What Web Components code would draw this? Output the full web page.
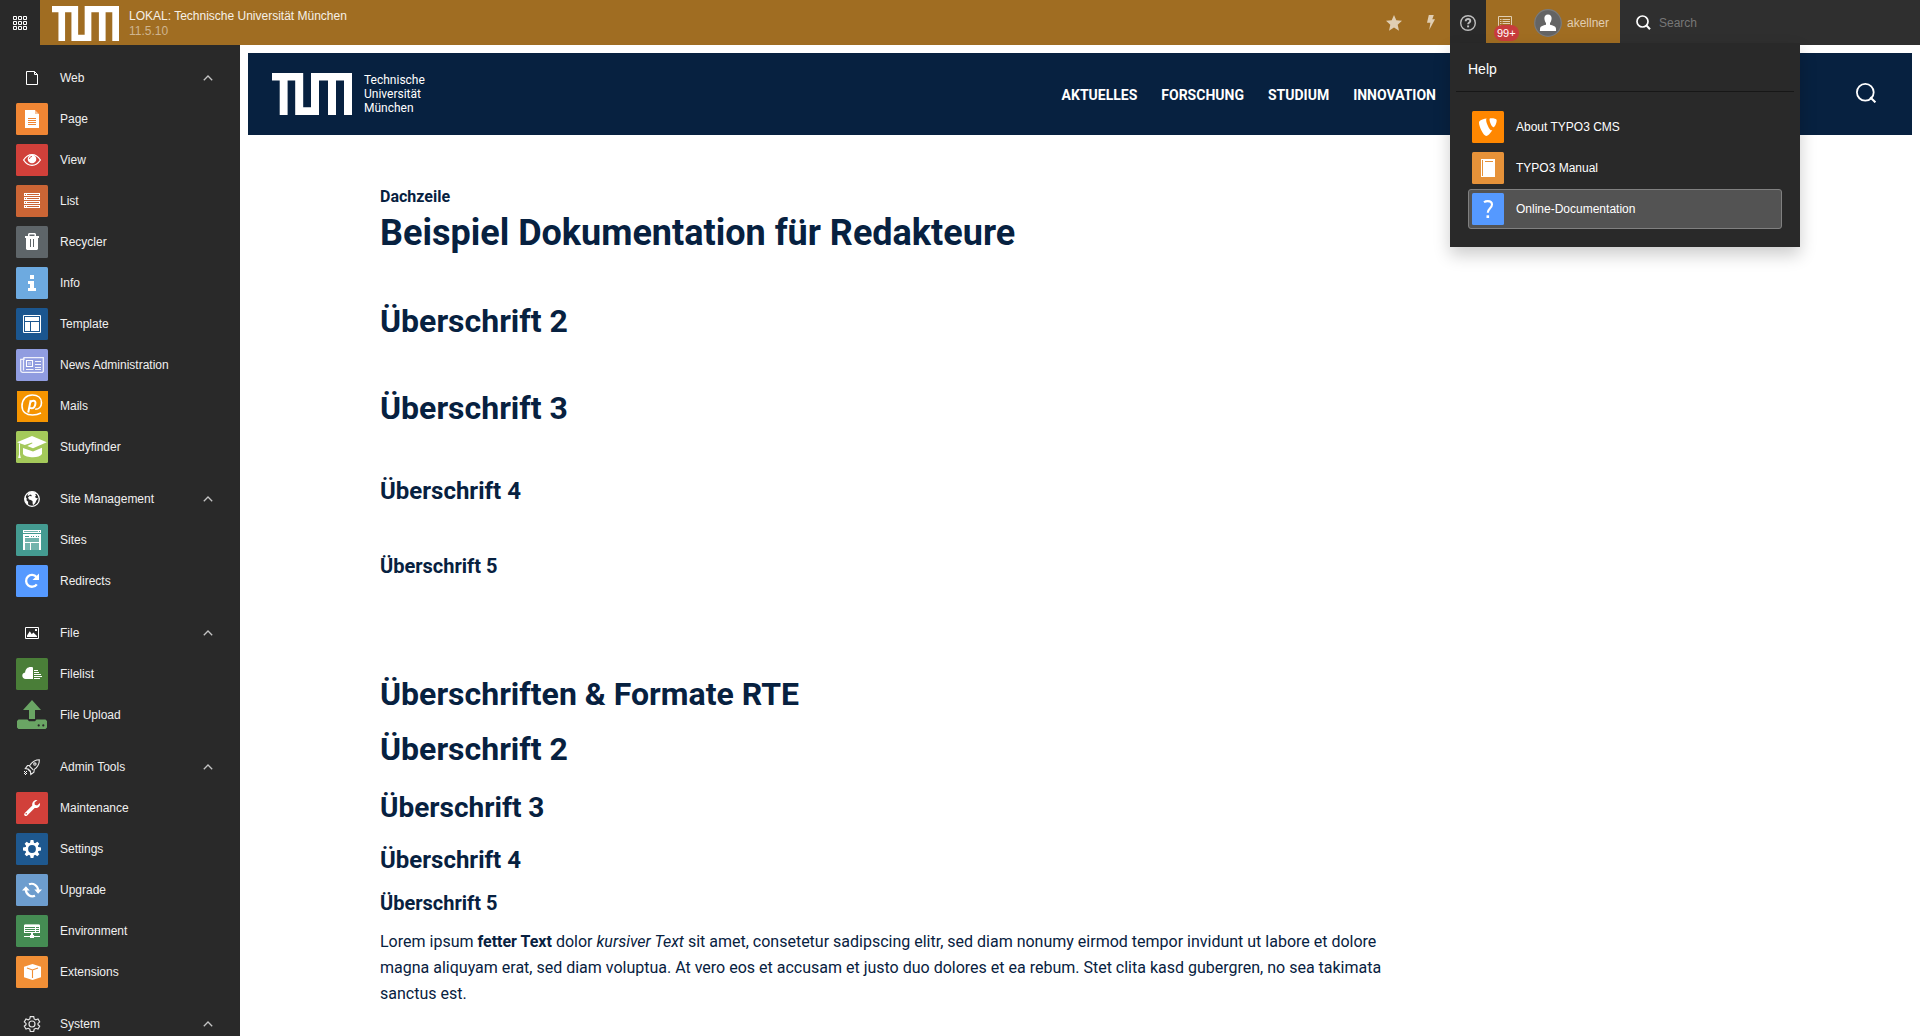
<!DOCTYPE html>
<html lang="de">
<head>
<meta charset="utf-8">
<title>TYPO3 Backend</title>
<style>
html, body { margin: 0; height: 100%; }
body { overflow: hidden; background: #fff; font-family: "Liberation Sans", Arial, sans-serif; font-size: 12px; }
</style>
</head>
<body>
<be-app></be-app>

<script>
const ICONS = {
  apps: `<svg viewBox="0 0 14 14" width="14" height="14" fill="none" stroke="#fff"><path d="M.5.5h3v3h-3zM5.5.5h3v3h-3zM10.5.5h3v3h-3zM.5 5.5h3v3h-3zM5.5 5.5h3v3h-3zM10.5 5.5h3v3h-3zM.5 10.5h3v3h-3zM5.5 10.5h3v3h-3zM10.5 10.5h3v3h-3z"/></svg>`,
  star: `<svg viewBox="0 0 16 16" width="16" height="16" fill="#e0ceb3"><path d="M8 0l2.3 5.3 5.7.5-4.3 3.9L13 15.7 8 12.5l-5 3.2 1.3-6L0 5.8l5.7-.5z"/></svg>`,
  bolt: `<svg viewBox="0 0 8 15" width="8" height="15" fill="#e0ceb3"><path d="M1.8 0h5L5.300 4.200H8L2.200 15l1.200-7.300H0z"/></svg>`,
  help: `<svg viewBox="0 0 16 16" width="16" height="16" fill="none" stroke="#bebebe"><circle cx="8" cy="8" r="7.300" stroke-width="1.400"/><path d="M5.700 6.200c0-1.500 1-2.200 2.300-2.200s2.300.7 2.300 2c0 1.500-2.200 1.600-2.200 3.300" stroke-width="1.900"/><path d="M7.100 11.400h2" stroke-width="1.900"/></svg>`,
  sysinfo: `<svg viewBox="0 0 14 14" width="14" height="14" fill="none" stroke="#e0ceb3"><path d="M.5.5h13v13H.5zM2 3.500h1.500M4.500 3.500H12M2 5.500h1.500M4.500 5.500H12M2 7.500h1.500M4.500 7.500H12M2 9.500h1.500M4.500 9.500H12"/></svg>`,
  avatar: `<svg viewBox="0 0 28 28" width="28" height="28"><circle cx="14" cy="14" r="13.300" fill="#646464" stroke="#7b7b7b" stroke-width="1.200"/><path fill="#fff" d="M14 5.500c2.500 0 3.800 1.700 3.600 4.200-.2 2-.8 3.200-1.600 4.200v1.800c2.700.6 5.500 1.500 5.900 3.200l.2 3.100H5.900l.2-3.100c.4-1.700 3.200-2.600 5.900-3.200v-1.800c-.8-1-1.400-2.200-1.600-4.200-.2-2.500 1.100-4.200 3.600-4.200z"/></svg>`,
  search: `<svg viewBox="0 0 15 15" width="15" height="15" fill="none" stroke="#fff" stroke-width="1.700"><circle cx="6.500" cy="6.500" r="5.500"/><path d="M10.500 10.500l3.500 3.700" stroke-width="2"/></svg>`,
  searchLarge: `<svg viewBox="0 0 20 20" width="20" height="20" fill="none" stroke="#fff" stroke-width="1.800"><circle cx="9.300" cy="9.300" r="8.400"/><path d="M14.200 14.200l5.200 5.200" stroke-width="2"/></svg>`,
  chevron: `<svg viewBox="0 0 10 6" width="10" height="6" fill="none" stroke="#c4c4c4" stroke-width="1.300"><path d="M.8 5.200L5 1l4.200 4.200"/></svg>`,

  web: `<path d="M10.500 9.500h8l3 3v10h-11zM18.500 9.500v3h3" fill="none" stroke="#fff"/>`,
  site: `<circle cx="16" cy="16" r="7.300" fill="none" stroke="#fff" stroke-width="1.300"/><path fill="#fff" d="M13 9.200l4.500-.4 2.800 1.600-1.100 1.100 1 .9-1.100 1 .7 1.500 2.200.3-1.700 2.300-.9 2.200-1.800 2.300-.9-.8-.2-3.100-1.800-1.200-1.700-.5-1-1.800 1.500-1.500 2.300.1-.4-1.300-1.400-.4-1 1.300-1.700-.5z"/><path fill="#fff" d="M9.200 13.500l1.600 2-.3 1.700 1.600 1.600v3.100c-2-1.200-3.500-4-3.500-6.200z"/>`,
  file: `<path d="M9.500 10.500h13v11h-13z" fill="none" stroke="#fff"/><path fill="#fff" d="M11 20v-1.500l2.800-4.300 2 3 1.500-1.800 3.700 3.500V20zM19 12h2v2h-2z"/>`,
  tools: `<g fill="none" stroke="#e8e8e8" stroke-width="1.100"><path d="M23.300 8.700c-4.300.1-7 1.900-9.300 5.500l-2.500.4-2.200 3 2.600.4 2.600 2.600.3 2.800 3.100-2.200.4-2.800c3.400-2.300 5.200-5.100 5-9.700z"/><path d="M12 18l2.500 2.500M13.400 15l3.800 3.800"/><circle cx="18.900" cy="13.100" r="1.200"/></g><path fill="#fff" d="M8 20h1v1H8zM9 21h1v1H9zM8 22h1v1H8zM10 22h1v1h-1zM9 23h1v1H9zM10 20h1v1h-1z"/>`,
  system: `<g fill="none" stroke="#e4e4e4" stroke-width="1.200"><path d="M14.300 8.600h3.400l.5 2.300 1.600.9 2.200-.8 1.700 2.900-1.700 1.500v1.300l1.700 1.500-1.700 2.900-2.200-.8-1.600.9-.5 2.300h-3.400l-.5-2.300-1.600-.9-2.200.8-1.700-2.900 1.700-1.500v-1.300l-1.700-1.500L10 11l2.200.8 1.600-.9z"/><circle cx="16" cy="16" r="3"/></g>`,

  page: `<rect width="32" height="32" rx="1.500" fill="#f08634"/><path fill="#fff" d="M9 7h10v4h4v14H9z"/><path fill="#fff" opacity=".5" d="M19 7l4 4h-4z"/><path stroke="#f08634" d="M12 15.500h8M12 17.500h8M12 19.500h8M12 21.500h8"/>`,
  view: `<rect width="32" height="32" rx="1.500" fill="#d1403a"/><path d="M7.600 16C10 12.300 12.800 10.700 16 10.700s6 1.600 8.400 5.300c-2.400 3.700-5.200 5.300-8.400 5.300S10 19.700 7.600 16z" fill="none" stroke="#fff" stroke-width="1.300"/><circle cx="16" cy="15" r="4.300" fill="#fff"/><path d="M13.500 15c0-1.500 1-2.500 2.500-2.500" stroke="#d1403a" fill="none" stroke-width=".9"/>`,
  list: `<rect width="32" height="32" rx="1.500" fill="#cb6535"/><path fill="#fff" d="M8 8h16v3H8zM8 12h16v3H8zM8 16h16v3H8zM8 20h16v3H8z"/><path stroke="#cb6535" d="M9 9.500h1M11 9.500h12M9 13.500h1M11 13.500h12M9 17.500h1M11 17.500h12M9 21.500h1M11 21.500h12"/>`,
  recycler: `<rect width="32" height="32" rx="1.500" fill="#5e6569"/><path fill="#fff" d="M12 10V8l1-1h6l1 1v2h3v2h-1v11l-1 1H11l-1-1V12H9v-2zM13.500 8.500V10h5V8.500z" fill-rule="evenodd"/><path stroke="#5e6569" d="M14.500 13v8M17.500 13v8"/>`,
  info: `<rect width="32" height="32" rx="1.500" fill="#6daae0"/><path fill="#fff" d="M14 8h4v4h-4zM12 14h6v7h2v3h-8v-3h2v-4h-2z"/>`,
  template: `<rect width="32" height="32" rx="1.500" fill="#1b568f"/><path d="M7.500 7.500h17v17h-17z" fill="none" stroke="#fff"/><path fill="#fff" d="M9 9h14v4H9zM9 14h5v9H9zM15 14h8v9h-8z"/>`,
  news: `<rect width="32" height="32" rx="1.500" fill="#909ce0"/><g fill="none" stroke="#fff"><path d="M8 8.600h19.300v13.800l-1 1H6.500c-1.300 0-1.800-.8-1.800-1.800V10.400H8zM7.500 9v12.500" stroke-width="1.300" opacity=".85"/><path d="M10.500 11.500h6v6h-6z" stroke-width="1.100"/><path d="M19 12.500h6M19 15.500h6M19 18.500h6M10 20.500h7.500M19 20.500h6" opacity=".9"/></g><path d="M12 13h3v3h-3z" fill="#fff" opacity=".4"/>`,
  mails: `<path fill="#f59400" d="M1 1h31v31H1z"/><g fill="none" stroke="#fff"><path d="M25 23c-2.500 1.300-5.300 2-8.500 2C10 25 6 21.500 6 16 6 9.500 10.300 5 16.300 5 21.800 5 25.500 8 25.500 12.700c0 4-2.700 6.600-6.300 6.600" stroke-width="1.600"/><path d="M14.700 10.200l-2.500 12.300M14.300 12.500c.8-1.200 1.900-1.800 3.100-1.800 1.600 0 2.300 1.100 2 3.100-.4 2.800-1.900 4.500-3.900 4.500-1.100 0-1.900-.4-2.200-1.300" stroke-width="2"/></g>`,
  study: `<rect width="32" height="32" rx="1.500" fill="#a4c95a"/><path fill="#fff" d="M16 5l14.800 6.200L17 17.300 11.300 15l5.200-2.700-.4-.9-7.300 2.700L1 11.200zM7 17l10 3.600L26 16.800V23c-1.700 2.600-4.800 3.200-9 3.200S8.500 25.500 7 23z"/><path d="M3.500 12.500v11" stroke="#fff"/><path fill="#fff" d="M3.500 21l1.300 6H2.200z"/>`,
  sites: `<rect width="32" height="32" rx="1.500" fill="#449b91"/><path fill="#fff" d="M7 6h18v3H7zM7 10h18v16H7z"/><path fill="#449b91" d="M23 7h1v1h-1zM9 12h4v1H9zM15 12h1v1h-1zM17 12h1v1h-1zM20 12h1v1h-1zM22 12h1v1h-1z"/><path fill="#73b4ad" d="M9 14h14v4H9zM9 19h5v7H9zM15 19h8v7h-8zM8 7h14v1H8z"/>`,
  redirects: `<rect width="32" height="32" rx="1.500" fill="#5599ff"/><path d="M20.800 19.300A5.900 5.900 0 1 1 20.500 12" fill="none" stroke="#fff" stroke-width="2.300"/><path fill="#fff" d="M23 8.500V15h-6.500z"/>`,
  filelist: `<rect width="32" height="32" rx="1.500" fill="#4a7e38"/><path fill="#fff" d="M17 9.500V21H9.700C7.700 21 6.300 19.700 6.300 17.800c0-1.800 1-2.900 2.800-3.300.3-3.300 2.400-5.400 5.600-5.400.9 0 1.600.1 2.300.4z"/><path stroke="#fff" d="M18 12.500h4M18 14.500h5M18 16.500h7M18 18.500h8M18 20.500h6"/>`,
  upload: `<path fill="#6aa564" d="M16 1l9 10h-6v9h-6v-9H7zM2.500 20.500h9l1.500 1.800h6l1.500-1.800h9L31 22v6.500l-1.500 1.500h-27L1 28.500V22z"/><g fill="#292929"><circle cx="22.700" cy="26.400" r="1.100"/><circle cx="27.300" cy="26.400" r="1.100"/></g>`,
  maintenance: `<rect width="32" height="32" rx="1.500" fill="#d1403a"/><path fill="#fff" d="M21.500 8l-3 2.500.3 2.300 2.300.7L24 11c.4 3.300-2 5.600-5.300 5l-7.500 7.400c-.9.9-2 .8-2.600.1s-.6-1.700.2-2.500l7.500-7.500c-.7-3.300 1.900-6 5.200-5.500z"/><circle cx="10.200" cy="21.800" r=".8" fill="#d1403a"/>`,
  settings: `<rect width="32" height="32" rx="1.500" fill="#1e588f"/><g fill="#fff"><circle cx="16" cy="16" r="6.600"/><path d="M14.600 7h2.800l.8 4h-4.400zM14.600 25h2.800l.8-4h-4.400zM7 14.600v2.800l4 .8v-4.400zM25 14.600v2.800l-4 .8v-4.400z"/><path transform="rotate(45 16 16)" d="M14.600 7h2.800l.8 4h-4.400zM14.600 25h2.800l.8-4h-4.400zM7 14.600v2.800l4 .8v-4.400zM25 14.600v2.800l-4 .8v-4.400z"/></g><circle cx="16" cy="16" r="3.900" fill="#1e588f"/>`,
  upgrade: `<rect width="32" height="32" rx="1.500" fill="#6d9dce"/><g fill="none" stroke="#fff" stroke-width="2.200"><path d="M13 10.300c4.200-1.700 8.900 1 9.200 6.200M19 21.800c-4.200 1.700-8.900-1-9.200-6.200"/></g><path fill="#fff" d="M18.300 15.500H26l-3.900 4.200zM6 16.500h7.700L9.900 12.300z"/>`,
  environment: `<rect width="32" height="32" rx="1.500" fill="#458c53"/><path fill="#b8d4bd" d="M9 9h14l1 1H8z"/><path fill="#fff" d="M8 10h16v8H8zM15 18h2v2h1v1h6v1h-6v1h-4v-1H8v-1h6v-1h1z"/><path stroke="#458c53" d="M9 12.500h10M20 12.500h3M9 14.500h10M20 14.500h3M9 16.500h10M20 16.500h3"/>`,
  extensions: `<rect width="32" height="32" rx="1.500" fill="#f18f36"/><path fill="#fff" d="M16.500 8L25 10.800v10.400L16.500 24 8 21.200V10.800z"/><path d="M11 12l5.500 2 5.500-2M16.500 14v8" fill="none" stroke="#f18f36" stroke-width="1.100"/>`,
  typo3: `<rect width="32" height="32" rx="1.500" fill="#ff8700"/><path fill="#fff" transform="translate(4.800 4.800) scale(1.400)" d="M11.100 10.300c-.2 0-.3.100-.5.100C9 10.400 6.700 4.900 6.700 3.100c0-.7.200-.9.400-1.100C5.100 2.200 2.700 3 1.900 3.900c-.2.200-.3.600-.3 1.100 0 2.900 3.100 9.400 5.200 9.400 1 0 2.700-1.600 4.300-4.100M10.300 1.800c1.900 0 3.900.3 3.900 1.400 0 2.200-1.400 5-2.200 5-1.300 0-2.900-3.700-2.900-5.500 0-.8.300-.9 1.200-.9"/>`,
  manual: `<rect width="32" height="32" rx="1.500" fill="#e69239"/><path fill="#fff" d="M9 7h14v18H9z"/><path stroke="#e69239" d="M10.500 8v16M13 9.500h8"/>`,
  docs: `<rect width="32" height="32" rx="1.500" fill="#5599ff"/><path d="M12 9.300c1-.8 2.200-1.200 3.700-1.200 2.700 0 4.300 1.300 4.300 3.500 0 3.700-4.200 3.700-4.200 8.200" fill="none" stroke="#fff" stroke-width="2.100"/><path fill="#fff" d="M14.500 22.300h2.600V25h-2.600z"/>`
};

const define = (name, html, setup) => customElements.define(name, class extends HTMLElement {
  constructor() {
    super();
    const tpl = document.createElement('template');
    tpl.innerHTML = html;
    this.attachShadow({ mode: 'open' }).append(tpl.content.cloneNode(true));
  }
  connectedCallback() { if (setup) setup(this, this.shadowRoot); }
});

const RESET = `*{box-sizing:border-box} button,input{font:inherit;color:inherit;background:none;border:0;padding:0;margin:0} a{color:inherit;text-decoration:none}`;

/* Stand-alone glyph, drawn at its own size */
define('be-glyph', `<style>:host{display:inline-flex;flex:none}svg{display:block}</style><span></span>`,
  (el, root) => { root.querySelector('span').innerHTML = ICONS[el.getAttribute('name')]; });

/* 32px module icon */
define('be-icon', `<style>:host{display:block;flex:none;width:32px;height:32px}svg{display:block}</style><svg width="32" height="32" viewBox="0 0 32 32" aria-hidden="true"></svg>`,
  (el, root) => { root.querySelector('svg').innerHTML = ICONS[el.getAttribute('name')] || ''; });

const passIcon = (el, root) => {
  const icon = root.querySelector('be-icon');
  icon.setAttribute('name', el.getAttribute('icon'));
  icon.connectedCallback();
};

define('tum-logo', `<style>:host{display:block;flex:none}svg{display:block;width:100%}</style>
<svg viewBox="0 0 80 42" fill="#fff" role="img" aria-label="TUM"><path d="M0 0H31.200V34.200H39V0H80V42H72V7.400H64V42H56V7.400H47V42H23.200V7.400H15.600V42H7.700V7.400H0Z"/></svg>`);

define('be-toolbar-button', `<style>${RESET}
:host{display:block;position:relative;width:36px}
:host([active]){background:#292929}
button{display:flex;align-items:center;justify-content:center;width:100%;height:100%;cursor:pointer}
</style><button type="button"><slot></slot></button><slot name="menu"></slot>`,
  (el, root) => root.querySelector('button').setAttribute('aria-label', el.getAttribute('label')));

define('be-help-item', `<style>${RESET}
:host{display:block}
a{display:flex;align-items:center;gap:12px;height:40px;padding:0 3px;border:1px solid transparent;border-radius:3px;color:#fff}
:host([active]) a{background:#535353;border-color:#808080}
</style><a href="#"><be-icon></be-icon><span><slot></slot></span></a>`, passIcon);

define('be-help-menu', `<style>${RESET}
:host{display:block;position:absolute;z-index:5;top:43px;left:0;width:350px;padding:0 6px 18px;background:#292929;color:#fff;box-shadow:0 8px 16px rgba(0,0,0,.2)}
h2{margin:0;padding:16px 12px 12px;font-size:14px;line-height:20px;font-weight:400;border-bottom:1px solid #171717}
nav{display:flex;flex-direction:column;gap:1px;padding:15px 12px 0}
</style>
<h2>Help</h2>
<nav aria-label="Help">
<be-help-item icon="typo3">About TYPO3 CMS</be-help-item>
<be-help-item icon="manual">TYPO3 Manual</be-help-item>
<be-help-item icon="docs" active>Online-Documentation</be-help-item>
</nav>`);

define('be-topbar', `<style>${RESET}
:host{display:flex;height:45px;background:#a06d22;color:#fff}
.apps{display:flex;align-items:center;justify-content:center;width:40px;background:#292929}
.site{display:flex;align-items:center;gap:10px;padding:2px 12px 0;color:#f6f0e7}
.site tum-logo{width:67px}
.site p{margin:0;line-height:15px}
.site small{display:block;font-size:12px;color:#cfb58f}
.tools{display:flex;gap:1px;margin-left:auto}
.badge{position:absolute;left:7px;top:25px;height:16px;padding:0 3px;border-radius:8px;background:#c83c3c;color:#fff;font-size:11px;line-height:17px}
.user{display:flex;align-items:center;gap:5px;width:96px;padding:0 10px;color:#e0ceb3}
.search{display:flex;align-items:center;gap:8px;width:300px;padding:0 16px;background:#2f2f2f}
.search input{flex:1;min-width:0;outline:0}
.search input::placeholder{color:#777;opacity:1}
</style>
<button class="apps" type="button" aria-label="Toggle modules"><be-glyph name="apps"></be-glyph></button>
<a class="site" href="#"><tum-logo></tum-logo><p>LOKAL: Technische Universität München<small>11.5.10</small></p></a>
<div class="tools">
<be-toolbar-button label="Bookmarks"><be-glyph name="star"></be-glyph></be-toolbar-button>
<be-toolbar-button label="Clear cache"><be-glyph name="bolt"></be-glyph></be-toolbar-button>
<be-toolbar-button label="Help" active><be-glyph name="help"></be-glyph><be-help-menu slot="menu"></be-help-menu></be-toolbar-button>
<be-toolbar-button label="System information"><be-glyph name="sysinfo"></be-glyph><span class="badge" slot="menu">99+</span></be-toolbar-button>
<button class="user" type="button"><be-glyph name="avatar"></be-glyph><span>akellner</span></button>
</div>
<label class="search"><be-glyph name="search"></be-glyph><input type="text" placeholder="Search" aria-label="Search"></label>`);

define('be-module', `<style>${RESET}
:host{display:block}
a{display:flex;align-items:center;gap:12px;height:40px;padding:0 16px}
</style><a href="#"><be-icon></be-icon><span><slot></slot></span></a>`, passIcon);

define('be-module-group', `<style>${RESET}
:host{display:flex;flex-direction:column;gap:1px}
button{display:flex;align-items:center;gap:12px;width:100%;height:40px;padding:0 27px 0 16px;text-align:left;cursor:pointer}
be-glyph{margin-left:auto}
</style><button type="button" aria-expanded="true"><be-icon></be-icon><span class="label"></span><be-glyph name="chevron"></be-glyph></button><slot></slot>`,
  (el, root) => {
    passIcon(el, root);
    root.querySelector('.label').textContent = el.getAttribute('label');
  });

define('be-module-menu', `<style>
:host{display:block;flex:none;width:240px;background:#292929;color:#f0f0f0;overflow:hidden}
nav{display:flex;flex-direction:column;gap:12px;padding:13px 0}
</style>
<nav aria-label="Modules">
<be-module-group label="Web" icon="web">
<be-module icon="page">Page</be-module><be-module icon="view">View</be-module><be-module icon="list">List</be-module><be-module icon="recycler">Recycler</be-module><be-module icon="info">Info</be-module><be-module icon="template">Template</be-module><be-module icon="news">News Administration</be-module><be-module icon="mails">Mails</be-module><be-module icon="study">Studyfinder</be-module>
</be-module-group>
<be-module-group label="Site Management" icon="site">
<be-module icon="sites">Sites</be-module><be-module icon="redirects">Redirects</be-module>
</be-module-group>
<be-module-group label="File" icon="file">
<be-module icon="filelist">Filelist</be-module><be-module icon="upload">File Upload</be-module>
</be-module-group>
<be-module-group label="Admin Tools" icon="tools">
<be-module icon="maintenance">Maintenance</be-module><be-module icon="settings">Settings</be-module><be-module icon="upgrade">Upgrade</be-module><be-module icon="environment">Environment</be-module><be-module icon="extensions">Extensions</be-module>
</be-module-group>
<be-module-group label="System" icon="system"></be-module-group>
</nav>`);

define('site-header', `<style>${RESET}
:host{display:flex;align-items:center;padding:20px 36px 20px 24px;background:#072140;color:#fff}
.brand{display:flex;align-items:center;gap:12px;font-size:12px;line-height:14px}
.brand tum-logo{width:80px}
nav{display:flex;gap:24px;margin-left:auto;margin-right:420px;padding-top:2px;font-size:14px;font-weight:700;line-height:20px}
button{cursor:pointer}
</style>
<a class="brand" href="#"><tum-logo></tum-logo><span>Technische<br>Universität<br>München</span></a>
<nav aria-label="Hauptnavigation"><a href="#">AKTUELLES</a><a href="#">FORSCHUNG</a><a href="#">STUDIUM</a><a href="#">INNOVATION</a></nav>
<button type="button" aria-label="Suche"><be-glyph name="searchLarge"></be-glyph></button>`);

define('site-article', `<style>
:host{display:block;max-width:1400px;margin:0 auto;padding:50px 0 0;box-sizing:border-box;color:#072140;font-size:16px;line-height:26px}
h1,h2,h3,h4,h5,p{margin:0}
.kicker{font-weight:700;line-height:24px}
h1{font-size:36px;line-height:48px}
h2,.xl{font-size:32px;line-height:40px}
h3{font-size:28px;line-height:36px}
h4{font-size:24px;line-height:32px}
h5{font-size:20px;line-height:24px}
.intro{display:flex;flex-direction:column;gap:47px}
header{margin-bottom:-3px}
.rte{margin-top:96px;width:73%}
.rte h2+h2,.rte h4+h5{margin-top:15px}
.rte h3{margin-top:21px}
.rte h4{margin-top:18px}
.rte p{margin-top:14px}
</style>
<section class="intro">
<header><p class="kicker">Dachzeile</p><h1>Beispiel Dokumentation für Redakteure</h1></header>
<h2>Überschrift 2</h2><h3 class="xl">Überschrift 3</h3><h4>Überschrift 4</h4><h5>Überschrift 5</h5>
</section>
<section class="rte">
<h2>Überschriften &amp; Formate RTE</h2>
<h2>Überschrift 2</h2><h3>Überschrift 3</h3><h4>Überschrift 4</h4><h5>Überschrift 5</h5>
<p>Lorem ipsum <strong>fetter Text</strong> dolor <em>kursiver Text</em> sit amet, consetetur sadipscing elitr, sed diam nonumy eirmod tempor invidunt ut labore et dolore magna aliquyam erat, sed diam voluptua. At vero eos et accusam et justo duo dolores et ea rebum. Stet clita kasd gubergren, no sea takimata sanctus est.</p>
</section>`);

define('site-preview', `<style>
:host{display:block;flex:1;min-width:0;padding:8px;overflow:hidden;background:#fff;font-family:Roboto,sans-serif}
</style><site-header></site-header><site-article></site-article>`);

define('be-app', `<style>
:host{display:flex;flex-direction:column;height:100vh}
be-topbar{flex:none;position:relative;z-index:2}
main{display:flex;flex:1;min-height:0}
</style>
<be-topbar></be-topbar>
<main><be-module-menu></be-module-menu><site-preview></site-preview></main>`);
</script>
</body>
</html>
